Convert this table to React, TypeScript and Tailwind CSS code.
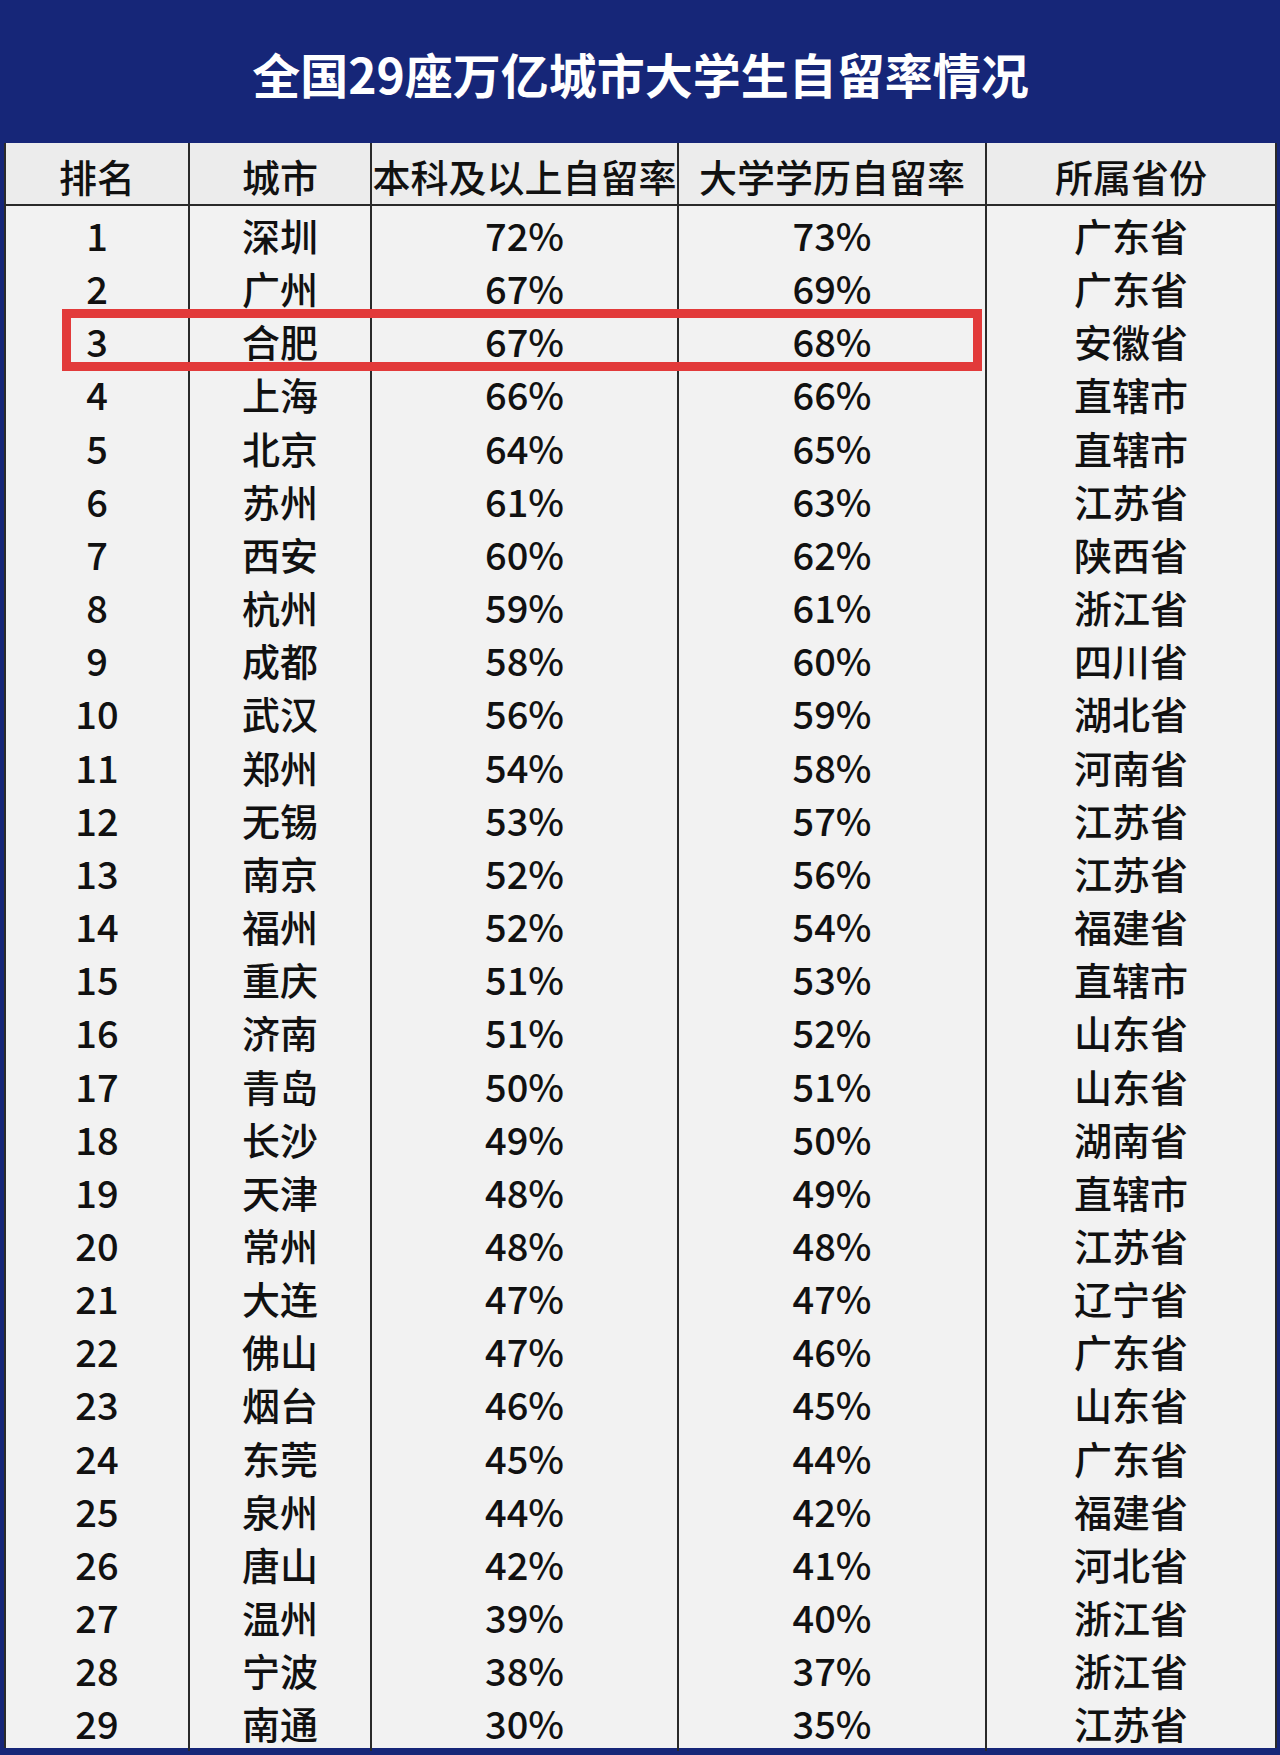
const ROWS: [string, string, string, string][] = [
  ['深圳', '72%', '73%', '广东省'],
  ['广州', '67%', '69%', '广东省'],
  ['合肥', '67%', '68%', '安徽省'],
  ['上海', '66%', '66%', '直辖市'],
  ['北京', '64%', '65%', '直辖市'],
  ['苏州', '61%', '63%', '江苏省'],
  ['西安', '60%', '62%', '陕西省'],
  ['杭州', '59%', '61%', '浙江省'],
  ['成都', '58%', '60%', '四川省'],
  ['武汉', '56%', '59%', '湖北省'],
  ['郑州', '54%', '58%', '河南省'],
  ['无锡', '53%', '57%', '江苏省'],
  ['南京', '52%', '56%', '江苏省'],
  ['福州', '52%', '54%', '福建省'],
  ['重庆', '51%', '53%', '直辖市'],
  ['济南', '51%', '52%', '山东省'],
  ['青岛', '50%', '51%', '山东省'],
  ['长沙', '49%', '50%', '湖南省'],
  ['天津', '48%', '49%', '直辖市'],
  ['常州', '48%', '48%', '江苏省'],
  ['大连', '47%', '47%', '辽宁省'],
  ['佛山', '47%', '46%', '广东省'],
  ['烟台', '46%', '45%', '山东省'],
  ['东莞', '45%', '44%', '广东省'],
  ['泉州', '44%', '42%', '福建省'],
  ['唐山', '42%', '41%', '河北省'],
  ['温州', '39%', '40%', '浙江省'],
  ['宁波', '38%', '37%', '浙江省'],
  ['南通', '30%', '35%', '江苏省'],
];

const HEADERS = ['排名', '城市', '本科及以上自留率', '大学学历自留率', '所属省份'];

// column lines sit at x = 188, 370, 677, 985 in the picture
const grid = 'grid grid-cols-[182px_182px_307px_308px_290px]';
const cell = 'flex items-center justify-center';
const divider = 'border-l-2 border-[#2a2a2a]';

export default function App() {
  return (
    <div
      className="flex h-[1755px] w-[1280px] flex-col bg-[#162678] pl-[4px] pr-[3px]"
      style={{ fontFamily: '"Noto Sans CJK SC", "Noto Sans", sans-serif' }}
    >
      <div className="flex h-[143px] shrink-0 items-center justify-center pt-[2px] text-[48px] font-bold text-white">
        全国29座万亿城市大学生自留率情况
      </div>

      <div className="relative border-x-2 border-[#2a2a2a] bg-[#f2f2f2] text-[38px] font-medium text-[#111]">
        <div className={`${grid} h-[63px] border-b-2 border-[#2a2a2a] bg-[#ececec]`}>
          {HEADERS.map((h, i) => (
            <div key={h} className={`${cell} pt-[4px] ${i > 0 ? divider : ''}`}>
              {h}
            </div>
          ))}
        </div>

        {ROWS.map((r, i) => (
          <div key={r[0]} className={`${grid} h-[53.17px]`}>
            <div className={cell}>{i + 1}</div>
            {r.map((v, j) => (
              <div key={j} className={`${cell} ${divider}`}>
                {v}
              </div>
            ))}
          </div>
        ))}

        {/* highlight on 合肥 */}
        <div className="pointer-events-none absolute left-[56px] top-[166px] h-[62px] w-[920px] border-[9px] border-[#e23a3a]" />
      </div>
    </div>
  );
}
